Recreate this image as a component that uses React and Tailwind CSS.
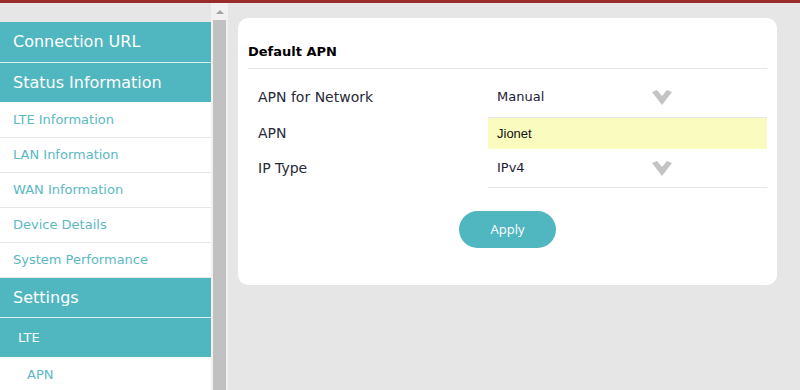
import React from 'react';

const teal = 'bg-[#50b6c0]';

const SideHead = ({ label, className = '' }) => (
    <div className={`${teal} flex shrink-0 items-center pl-[13px] text-[16px] text-white ${className}`}>
        {label}
    </div>
);

const SideItem = ({ label, className = 'h-[35px]' }) => (
    <div className={`flex shrink-0 items-center border-b border-[#e6e6e6] bg-white pl-[13px] text-[13px] text-[#5ab9c4] ${className}`}>
        {label}
    </div>
);

const Chevron = () => (
    <svg width="20" height="15" viewBox="0 0 20 15" className="shrink-0">
        <polygon points="0,2 5,0 10,6 15,0 20,2 10,15" fill="#c4c4c4" />
    </svg>
);

const Sidebar = () => (
    <aside className="flex w-[211px] shrink-0 flex-col overflow-hidden bg-[#e6e6e6]">
        <div className="h-[19px] shrink-0" />
        <SideHead label="Connection URL" className="h-[41px] border-b border-[#dff1f3]" />
        <SideHead label="Status Information" className="h-[39px]" />
        <SideItem label="LTE Information" className="h-[36px]" />
        <SideItem label="LAN Information" />
        <SideItem label="WAN Information" />
        <SideItem label="Device Details" />
        <SideItem label="System Performance" />
        <SideHead label="Settings" className="h-[40px] border-b border-[#dff1f3]" />
        <div className={`${teal} flex h-[39px] shrink-0 items-center pl-[18px] text-[13px] text-white`}>LTE</div>
        <div className="flex h-[35px] shrink-0 items-center bg-white pl-[27px] text-[13px] text-[#5ab9c4]">APN</div>
    </aside>
);

const Scrollbar = () => (
    <div className="flex w-[17px] shrink-0 flex-col items-center bg-[#f1f1f1]">
        <div className="flex h-[17px] w-full items-center justify-center">
            <div className="h-0 w-0 border-x-[4px] border-b-[4px] border-x-transparent border-b-[#a3a3a3]" />
        </div>
        <div className="w-[13px] flex-1 bg-[#c1c1c1]" />
    </div>
);

const Select = ({ value }) => (
    <div className="flex w-full items-center pl-[9px] pr-[95px] text-[13px] text-[#1c2035]">
        <span className="flex-1">{value}</span>
        <Chevron />
    </div>
);

const ApnCard = () => (
    <section className="ml-[10px] mr-[23px] mt-[15px] h-[267px] rounded-[10px] bg-white px-[10px]">
        <h3 className="flex h-[51px] items-end border-b border-[#e6e6e6] pb-[7px] text-[13px] font-bold text-black">
            Default APN
        </h3>
        <div className="flex flex-col">
            <div className="flex pt-[8px]">
                <div className="flex w-[240px] items-center pl-[10px] text-[14px] text-[#262a38]">APN for Network</div>
                <div className="flex h-[41px] flex-1 items-center border-b border-[#e6e6e6]">
                    <Select value="Manual" />
                </div>
            </div>
            <div className="flex">
                <div className="flex w-[240px] items-center pl-[10px] text-[14px] text-[#262a38]">APN</div>
                <div className="flex h-[31px] flex-1 items-center bg-[#f9fbbf] pl-[9px] font-['Liberation_Sans',sans-serif] text-[13px] text-[#111]">
                    Jionet
                </div>
            </div>
            <div className="flex">
                <div className="flex w-[240px] items-center pl-[10px] text-[14px] text-[#262a38]">IP Type</div>
                <div className="flex h-[39px] flex-1 items-center border-b border-[#e6e6e6]">
                    <Select value="IPv4" />
                </div>
            </div>
        </div>
        <div className="mt-[23px] flex justify-center">
            <button className="h-[37px] w-[97px] rounded-full bg-[#50b6c0] font-['Open_Sans',sans-serif] text-[13px] text-white">
                Apply
            </button>
        </div>
    </section>
);

export default function App() {
    return (
        <div className="flex h-[390px] w-[800px] flex-col overflow-hidden bg-[#e6e6e6] font-['DejaVu_Sans',sans-serif]">
            <div className="h-[3px] shrink-0 bg-[#9a2a2b]" />
            <div className="flex min-h-0 flex-1">
                <Sidebar />
                <Scrollbar />
                <main className="flex-1">
                    <ApnCard />
                </main>
            </div>
        </div>
    );
}
